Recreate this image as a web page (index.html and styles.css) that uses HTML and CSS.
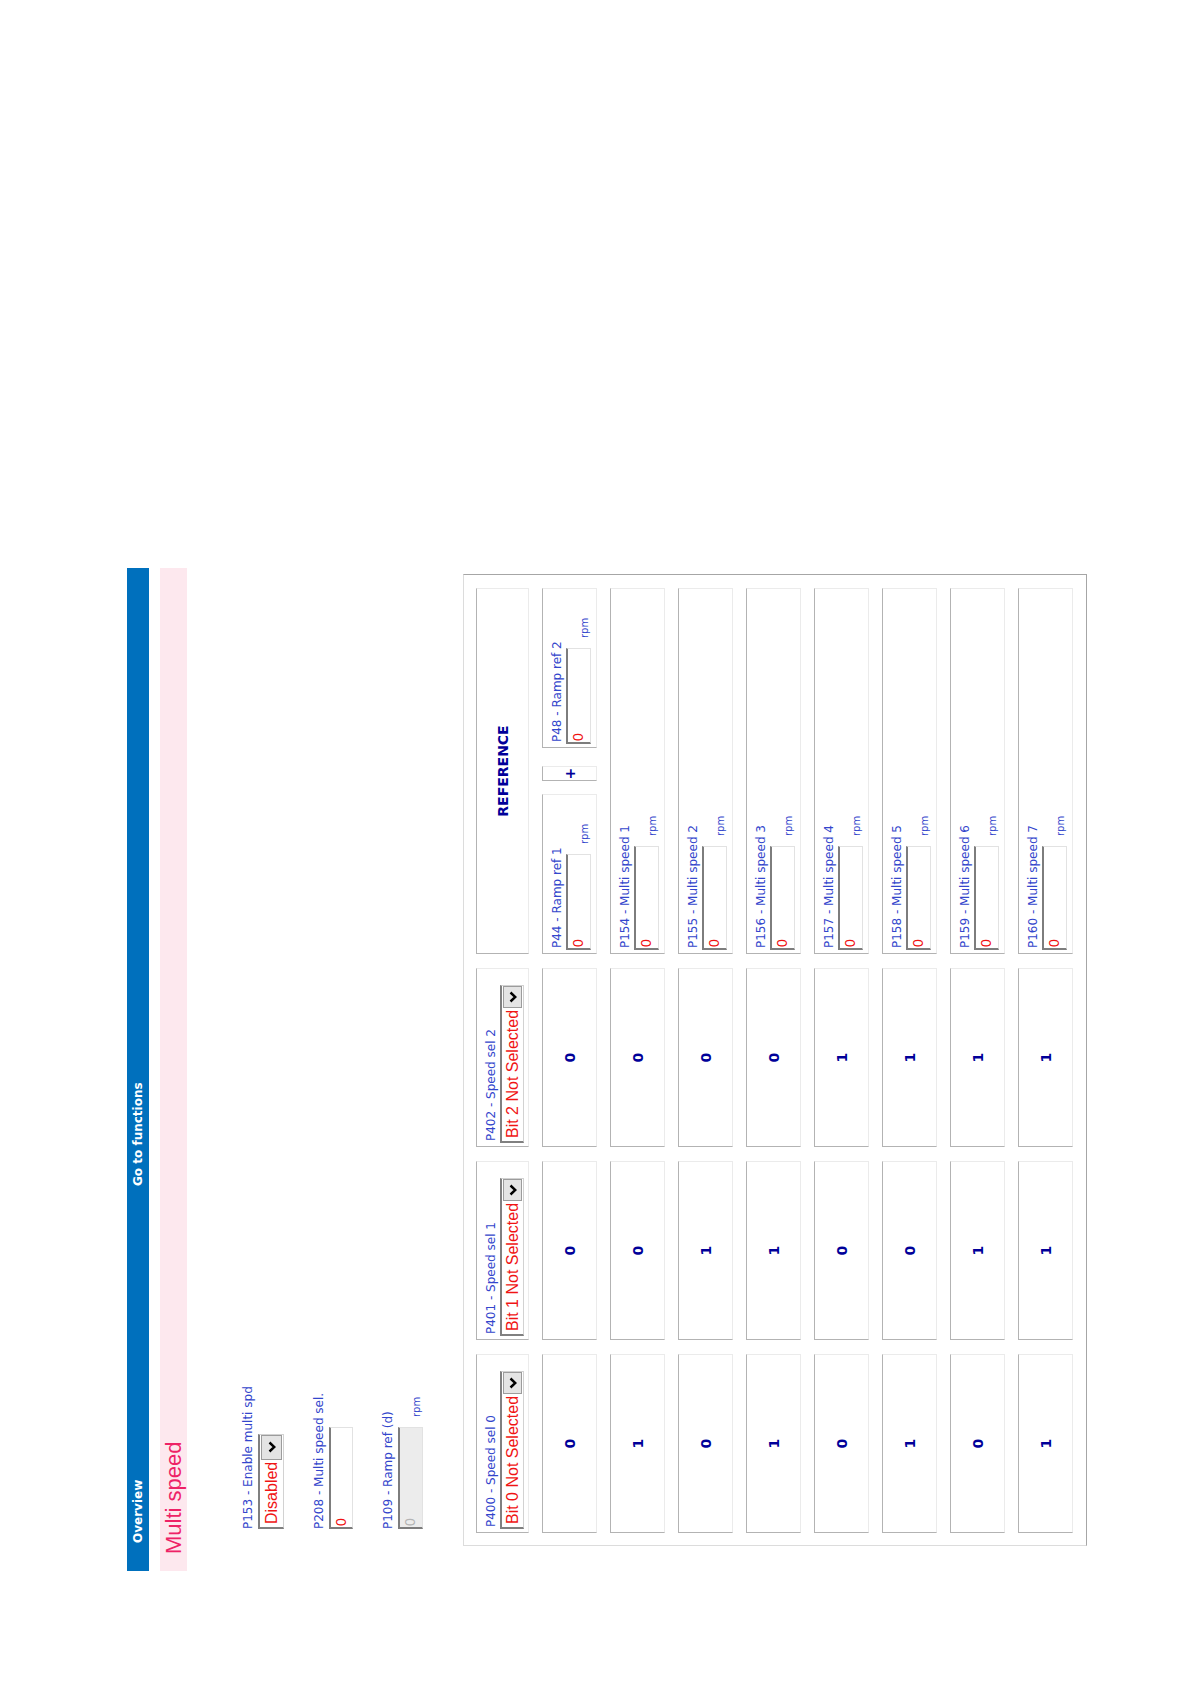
FILE: index.html
```html
<!DOCTYPE html>
<html>
<head>
<meta charset="utf-8">
<title>Multi speed</title>
<link rel="stylesheet" href="styles.css">
</head>
<body>
<div class="stage">
<div class="page">
  <div class="topbar">
    <span class="nav nav-overview">Overview</span>
    <span class="nav">Go to functions</span>
  </div>
  <div class="titlebar">Multi speed</div>

  <div class="params">
    <div class="param">
      <div class="label">P153 - Enable multi spd</div>
      <div class="select select-lg"><span class="select-text">Disabled</span><span class="select-btn"><svg class="chev" viewBox="0 0 12 8" width="12" height="8"><path d="M1.5 1.5 L6 6.3 L10.5 1.5" fill="none" stroke="#000" stroke-width="2.4"/></svg></span></div>
    </div>
    <div class="param">
      <div class="label">P208 - Multi speed sel.</div>
      <div class="field"><div class="input input-wide">0</div></div>
    </div>
    <div class="param">
      <div class="label">P109 - Ramp ref (d)</div>
      <div class="field"><div class="input input-wide input-disabled">0</div><span class="unit">rpm</span></div>
    </div>
  </div>

  <div class="panel">
    <div class="grid">
      <div class="cell cell-head">
        <div class="label">P400 - Speed sel 0</div>
        <div class="select"><span class="select-text">Bit 0 Not Selected</span><span class="select-btn"><svg class="chev" viewBox="0 0 12 8" width="12" height="8"><path d="M1.5 1.5 L6 6.3 L10.5 1.5" fill="none" stroke="#000" stroke-width="2.4"/></svg></span></div>
      </div>
      <div class="cell cell-head">
        <div class="label">P401 - Speed sel 1</div>
        <div class="select"><span class="select-text">Bit 1 Not Selected</span><span class="select-btn"><svg class="chev" viewBox="0 0 12 8" width="12" height="8"><path d="M1.5 1.5 L6 6.3 L10.5 1.5" fill="none" stroke="#000" stroke-width="2.4"/></svg></span></div>
      </div>
      <div class="cell cell-head">
        <div class="label">P402 - Speed sel 2</div>
        <div class="select"><span class="select-text">Bit 2 Not Selected</span><span class="select-btn"><svg class="chev" viewBox="0 0 12 8" width="12" height="8"><path d="M1.5 1.5 L6 6.3 L10.5 1.5" fill="none" stroke="#000" stroke-width="2.4"/></svg></span></div>
      </div>
      <div class="cell cell-ref">REFERENCE</div>

      <!-- row 1 -->
      <div class="cell cell-value">0</div>
      <div class="cell cell-value">0</div>
      <div class="cell cell-value">0</div>
      <div class="ref-pair">
        <div class="cell cell-param cell-sub">
          <div class="label">P44 - Ramp ref 1</div>
          <div class="field"><div class="input input-sm">0</div><span class="unit">rpm</span></div>
        </div>
        <div class="cell cell-plus">+</div>
        <div class="cell cell-param cell-sub">
          <div class="label">P48 - Ramp ref 2</div>
          <div class="field"><div class="input input-sm">0</div><span class="unit">rpm</span></div>
        </div>
      </div>

      <!-- row 2 -->
      <div class="cell cell-value">1</div>
      <div class="cell cell-value">0</div>
      <div class="cell cell-value">0</div>
      <div class="cell cell-param">
        <div class="label">P154 - Multi speed 1</div>
        <div class="field"><div class="input input-md">0</div><span class="unit">rpm</span></div>
      </div>

      <!-- row 3 -->
      <div class="cell cell-value">0</div>
      <div class="cell cell-value">1</div>
      <div class="cell cell-value">0</div>
      <div class="cell cell-param">
        <div class="label">P155 - Multi speed 2</div>
        <div class="field"><div class="input input-md">0</div><span class="unit">rpm</span></div>
      </div>

      <!-- row 4 -->
      <div class="cell cell-value">1</div>
      <div class="cell cell-value">1</div>
      <div class="cell cell-value">0</div>
      <div class="cell cell-param">
        <div class="label">P156 - Multi speed 3</div>
        <div class="field"><div class="input input-md">0</div><span class="unit">rpm</span></div>
      </div>

      <!-- row 5 -->
      <div class="cell cell-value">0</div>
      <div class="cell cell-value">0</div>
      <div class="cell cell-value">1</div>
      <div class="cell cell-param">
        <div class="label">P157 - Multi speed 4</div>
        <div class="field"><div class="input input-md">0</div><span class="unit">rpm</span></div>
      </div>

      <!-- row 6 -->
      <div class="cell cell-value">1</div>
      <div class="cell cell-value">0</div>
      <div class="cell cell-value">1</div>
      <div class="cell cell-param">
        <div class="label">P158 - Multi speed 5</div>
        <div class="field"><div class="input input-md">0</div><span class="unit">rpm</span></div>
      </div>

      <!-- row 7 -->
      <div class="cell cell-value">0</div>
      <div class="cell cell-value">1</div>
      <div class="cell cell-value">1</div>
      <div class="cell cell-param">
        <div class="label">P159 - Multi speed 6</div>
        <div class="field"><div class="input input-md">0</div><span class="unit">rpm</span></div>
      </div>

      <!-- row 8 -->
      <div class="cell cell-value">1</div>
      <div class="cell cell-value">1</div>
      <div class="cell cell-value">1</div>
      <div class="cell cell-param">
        <div class="label">P160 - Multi speed 7</div>
        <div class="field"><div class="input input-md">0</div><span class="unit">rpm</span></div>
      </div>
    </div>
  </div>
</div>
</div>
</body>
</html>
```

FILE: styles.css
```css
html, body {
  margin: 0;
  padding: 0;
  background: #ffffff;
}

/* Full-viewport stage so the turned page is painted everywhere. */
.stage {
  width: 1191px;
  height: 1684px;
}

/* The whole page is laid out normally, then turned a quarter-turn
   counter-clockwise, as in the reference. */
.page {
  width: 1003px;
  font-family: "DejaVu Sans", Verdana, sans-serif;
  transform-origin: 0 0;
  transform: translate(127px, 1571px) rotate(-90deg);
}

.topbar {
  height: 22px;
  background: #0070bd;
  display: flex;
  align-items: center;
  color: #ffffff;
  font-weight: bold;
  font-size: 12px;
  white-space: nowrap;
}

.nav-overview {
  margin-left: 28px;
  width: 357px;
}

.titlebar {
  margin-top: 11px;
  height: 27px;
  line-height: 27px;
  background: #fde8ee;
  color: #ee2266;
  font-family: "Liberation Sans", Arial, sans-serif;
  font-size: 22px;
  padding-left: 17px;
}

.params {
  padding-top: 54px;
  padding-left: 42px;
  display: flex;
  flex-direction: column;
  align-items: flex-start;
}

.param {
  display: flex;
  flex-direction: column;
  align-items: flex-start;
}

.param + .param {
  margin-top: 28px;
}

.label {
  font-size: 12px;
  line-height: 14px;
  color: #3346cc;
  white-space: nowrap;
}

.param .label {
  margin-bottom: 3px;
}

.field {
  display: flex;
  align-items: flex-end;
  gap: 10px;
}

.input {
  box-sizing: border-box;
  height: 25px;
  border-style: solid;
  border-width: 2px 1px 1px 2px;
  border-color: #7d7d7d #e2e2e2 #e2e2e2 #7d7d7d;
  background: #ffffff;
  font-family: "Liberation Sans", Arial, sans-serif;
  font-size: 14px;
  line-height: 21px;
  color: #f01010;
  padding-left: 1px;
}

.input-wide { width: 102px; height: 24px; }
.input-sm { width: 96px; }
.input-md { width: 104px; }

.input-disabled {
  height: 25px;
  background: #ececec;
  color: #b4b4b4;
}

.unit {
  font-size: 10px;
  line-height: 12px;
  color: #3346cc;
}

.select {
  box-sizing: border-box;
  display: inline-flex;
  align-items: center;
  height: 24px;
  border-style: solid;
  border-width: 2px 1px 1px 2px;
  border-color: #808080 #d2d2d2 #d2d2d2 #808080;
  background: #ffffff;
}

.select-lg {
  height: 26px;
}

.select-text {
  font-family: "Liberation Sans", Arial, sans-serif;
  font-size: 16px;
  line-height: 20px;
  color: #f01414;
  padding: 0 2px 0 3px;
  white-space: nowrap;
}

.select-btn {
  box-sizing: border-box;
  width: 22px;
  height: 19px;
  background: #e4e4e4;
  border: 1px solid #9c9c9c;
  display: flex;
  align-items: center;
  justify-content: center;
}

.select-lg .select-btn {
  width: 25px;
  height: 21px;
}

.chev {
  display: block;
}

.panel {
  margin-top: 40px;
  margin-left: 25px;
  width: 972px;
  box-sizing: border-box;
  border: 1px solid;
  border-color: #dcdcdc #a6a6a6 #a6a6a6 #dcdcdc;
  padding: 12px 13px 13px 12px;
}

.grid {
  display: grid;
  grid-template-columns: 179px 179px 179px 366px;
  grid-template-rows: 53px repeat(8, 55px);
  column-gap: 14px;
  row-gap: 13px;
}

.cell {
  box-sizing: border-box;
  border: 1px solid;
  border-color: #b3b3b3 #ebebeb #ebebeb #b3b3b3;
  background: #ffffff;
}

.cell-head,
.cell-param {
  padding: 7px 3px 0;
  display: flex;
  flex-direction: column;
  align-items: flex-start;
}

.cell-head .label,
.cell-param .label {
  padding-left: 2px;
  margin-bottom: 2px;
}

.cell-value,
.cell-ref,
.cell-plus {
  display: flex;
  align-items: center;
  justify-content: center;
  font-weight: bold;
  font-size: 14px;
  color: #000099;
}

.ref-pair {
  display: flex;
}

.cell-sub {
  width: 160px;
}

.cell-plus {
  width: 15px;
  margin-left: 13px;
  margin-right: 18px;
}
```
